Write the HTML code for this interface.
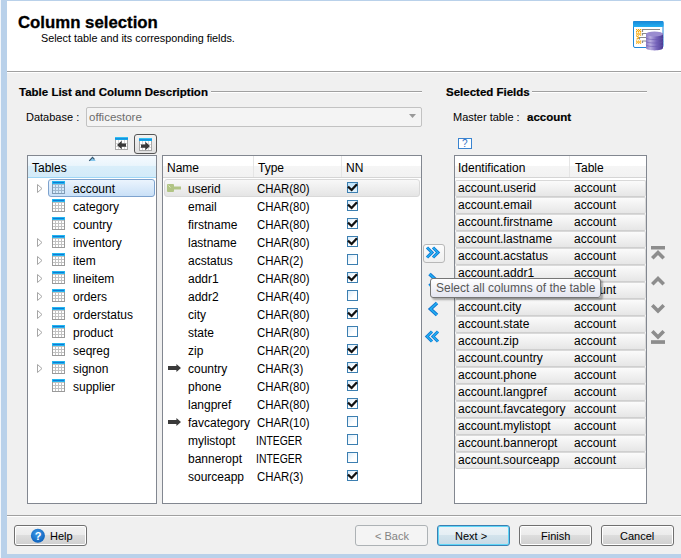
<!DOCTYPE html><html><head><meta charset="utf-8"><style>
*{margin:0;padding:0;box-sizing:border-box}
html,body{width:681px;height:558px;overflow:hidden;background:#f0f0f0;font-family:"Liberation Sans",sans-serif;color:#000}
.a{position:absolute}
.t{position:absolute;white-space:nowrap;line-height:14px}
</style></head><body>
<div class="a" style="left:0;top:0;width:1px;height:558px;background:#f2f6fb"></div>
<div class="a" style="left:1px;top:0;width:6px;height:558px;background:#b9d1ea"></div>
<div class="a" style="left:7px;top:0;width:674px;height:1px;background:#b9d1ea"></div>
<div class="a" style="left:7px;top:1px;width:674px;height:70px;background:#fff"></div>
<div class="a" style="left:7px;top:71px;width:674px;height:1px;background:#a0a0a0"></div>
<div class="a" style="left:7px;top:72px;width:674px;height:1px;background:#fff"></div>
<div class="a" style="left:7px;top:554px;width:674px;height:4px;background:#b9d1ea"></div>
<div class="t" style="left:18px;top:12.5px;font-size:16.8px;font-weight:bold;line-height:20px;-webkit-text-stroke:0.3px #000">Column selection</div>
<div class="t" style="left:41px;top:31px;font-size:10.8px;color:#000">Select table and its corresponding fields.</div>
<svg class="a" style="left:630px;top:18px" width="36" height="36" viewBox="0 0 36 36">
<defs><linearGradient id="tb" x1="0" y1="0" x2="0" y2="1"><stop offset="0" stop-color="#1a86d6"/><stop offset="1" stop-color="#22b0f2"/></linearGradient>
<linearGradient id="cy" x1="0" y1="0" x2="1" y2="0"><stop offset="0" stop-color="#8a7cc4"/><stop offset="0.25" stop-color="#b9aee0"/><stop offset="0.6" stop-color="#7a68be"/><stop offset="1" stop-color="#4a3a92"/></linearGradient></defs>
<rect x="3.5" y="3.5" width="29.5" height="26" rx="1.5" fill="#fff" stroke="#2086d8"/>
<rect x="3" y="3" width="30.5" height="6" rx="1" fill="url(#tb)"/>
<g fill="#f7a600"><rect x="6" y="11" width="1.2" height="1.2"/><rect x="8" y="11" width="1.2" height="1.2"/><rect x="10" y="11" width="1.2" height="1.2"/><rect x="7" y="12" width="1.2" height="1.2"/><rect x="9" y="12" width="1.2" height="1.2"/><rect x="6" y="13" width="1.2" height="1.2"/><rect x="8" y="13" width="1.2" height="1.2"/><rect x="10" y="13" width="1.2" height="1.2"/><rect x="6" y="14.5" width="1.2" height="1.2"/><rect x="8" y="14.5" width="1.2" height="1.2"/><rect x="10" y="14.5" width="1.2" height="1.2"/><rect x="7" y="15.5" width="1.2" height="1.2"/><rect x="9" y="15.5" width="1.2" height="1.2"/><rect x="6" y="16.5" width="1.2" height="1.2"/><rect x="8" y="16.5" width="1.2" height="1.2"/><rect x="10" y="16.5" width="1.2" height="1.2"/><rect x="6" y="22.5" width="1.2" height="1.2"/><rect x="8" y="22.5" width="1.2" height="1.2"/><rect x="10" y="22.5" width="1.2" height="1.2"/><rect x="7" y="23.5" width="1.2" height="1.2"/><rect x="9" y="23.5" width="1.2" height="1.2"/><rect x="6" y="24.5" width="1.2" height="1.2"/><rect x="8" y="24.5" width="1.2" height="1.2"/><rect x="10" y="24.5" width="1.2" height="1.2"/></g><path d="M6.5 18.2l3 1.5-3 1.5" stroke="#f7a600" stroke-width="1.2" fill="none"/>
<g stroke="#8a8a8a" fill="none" stroke-width="1.2"><path d="M12.5 14v-2.5h17.5M12.5 17.5v-2h7M9.5 21.5v-2h9M12.5 25v-2h6"/></g>
<path d="M16 16c0-2.5 17-2.5 17 0v14c0 3.2-17 3.2-17 0z" fill="url(#cy)"/>
<ellipse cx="24.5" cy="16" rx="8.5" ry="2.6" fill="#9a8cd0"/>
<g stroke="#6a58b0" stroke-width="0.8" fill="none" opacity="0.7"><path d="M16 19.8c0 2.3 17 2.3 17 0M16 23.3c0 2.3 17 2.3 17 0M16 26.8c0 2.3 17 2.3 17 0"/></g>
</svg>
<div class="t" style="left:19px;top:85px;font-size:11.5px;font-weight:bold;-webkit-text-stroke:0.2px #000">Table List and Column Description</div>
<div class="a" style="left:211px;top:91px;width:211px;height:1px;background:#a0a0a0;box-shadow:0 1px 0 #fff"></div>
<div class="t" style="left:446px;top:85px;font-size:11.5px;font-weight:bold;-webkit-text-stroke:0.2px #000">Selected Fields</div>
<div class="a" style="left:532px;top:91px;width:115px;height:1px;background:#a0a0a0;box-shadow:0 1px 0 #fff"></div>
<div class="t" style="left:26px;top:110px;font-size:11px">Database :</div>
<div class="a" style="left:86px;top:107px;width:336px;height:20px;border:1px solid #c2c2c2;border-radius:2px;background:#f4f4f4"></div>
<div class="t" style="left:89px;top:110px;font-size:11.5px;color:#6d6d6d">officestore</div>
<svg class="a" style="left:409px;top:114px" width="8" height="5"><path d="M0 0h7l-3.5 4z" fill="#999"/></svg>
<div class="t" style="left:453px;top:110px;font-size:11px">Master table :</div>
<div class="t" style="left:527px;top:110px;font-size:11.5px;font-weight:bold;-webkit-text-stroke:0.2px #000">account</div>
<div class="a" style="left:458px;top:138px;width:14px;height:11px;border:1px solid #3a84d0;background:#fff"></div>
<div class="t" style="left:462px;top:138px;font-size:10px;color:#2f6fc4;line-height:12px">?</div>
<svg class="a" style="left:115px;top:137px" width="13" height="13" viewBox="0 0 13 13">
<g shape-rendering="crispEdges"><rect x="0" y="0" width="13" height="13" fill="#a8a8a8"/><rect x="1" y="3" width="11" height="9" fill="#fff"/>
<path d="M1 6.5h11M1 9.5h11M3.5 3v9M6.5 3v9M9.5 3v9" stroke="#d6d6d6"/>
<rect x="0" y="0" width="13" height="1" fill="#33c0f0"/><rect x="0" y="1" width="13" height="1" fill="#1a8fe0"/><rect x="0" y="2" width="13" height="1" fill="#14a8e8"/></g>
<path d="M2 8L6.7 3.8V6.4H11V9.8H6.7V12.2z" fill="#3a3a3a"/></svg>
<div class="a" style="left:134px;top:134px;width:23px;height:20px;border:1px solid #555;border-radius:3px;background:linear-gradient(#f2f2f2,#e0e0e0)"></div>
<svg class="a" style="left:139px;top:138px" width="13" height="13" viewBox="0 0 13 13">
<g shape-rendering="crispEdges"><rect x="0" y="0" width="13" height="13" fill="#a8a8a8"/><rect x="1" y="3" width="11" height="9" fill="#fff"/>
<path d="M1 6.5h11M1 9.5h11M3.5 3v9M6.5 3v9M9.5 3v9" stroke="#d6d6d6"/>
<rect x="0" y="0" width="13" height="1" fill="#33c0f0"/><rect x="0" y="1" width="13" height="1" fill="#1a8fe0"/><rect x="0" y="2" width="13" height="1" fill="#14a8e8"/></g>
<path d="M11 8L6.3 3.8V6.4H2V9.8H6.3V12.2z" fill="#3a3a3a"/></svg>
<div class="a" style="left:27px;top:155px;width:130px;height:349px;border:1px solid #828790;background:#fff"></div>
<div class="a" style="left:162px;top:155px;width:260px;height:349px;border:1px solid #828790;background:#fff"></div>
<div class="a" style="left:454px;top:155px;width:193px;height:349px;border:1px solid #828790;background:#fff"></div>
<div class="a" style="left:28px;top:156px;width:128px;height:22px;background:linear-gradient(#f5fafe 0%,#eaf5fc 45%,#d9eefa 50%,#d3ebf9 100%);border-bottom:1px solid #9fd6f5"></div>
<svg class="a" style="left:88px;top:156px" width="9" height="6"><path d="M1 5L4.5 1.3L7.8 5z" fill="#86c8ee"/><path d="M1.2 4.8L4.5 1.3L6.5 3.4" stroke="#34566e" stroke-width="1.1" fill="none"/></svg>
<div class="t" style="left:32px;top:161px;font-size:12px">Tables</div>
<div class="a" style="left:48px;top:179px;width:107px;height:18px;border:1px solid #7da2ce;border-radius:3px;background:linear-gradient(#ebf4fd,#c9e0f7)"></div>
<svg class="a" style="left:37px;top:184px" width="7" height="10"><path d="M0.5 0.5l4.5 4-4.5 4z" fill="#fff" stroke="#a6a6a6"/></svg>
<svg class="a" style="left:52px;top:181px" width="13" height="13" viewBox="0 0 13 13" shape-rendering="crispEdges">
<rect x="0" y="0" width="13" height="13" fill="#7f9bb5"/><rect x="1" y="3" width="11" height="9" fill="#9fb8cf"/><rect x="1" y="4" width="2" height="2" fill="#d3e9fb"/><rect x="4" y="4" width="2" height="2" fill="#d3e9fb"/><rect x="7" y="4" width="2" height="2" fill="#d3e9fb"/><rect x="10" y="4" width="2" height="2" fill="#d3e9fb"/><rect x="1" y="7" width="2" height="2" fill="#d3e9fb"/><rect x="4" y="7" width="2" height="2" fill="#d3e9fb"/><rect x="7" y="7" width="2" height="2" fill="#d3e9fb"/><rect x="10" y="7" width="2" height="2" fill="#d3e9fb"/><rect x="1" y="10" width="2" height="2" fill="#d3e9fb"/><rect x="4" y="10" width="2" height="2" fill="#d3e9fb"/><rect x="7" y="10" width="2" height="2" fill="#d3e9fb"/><rect x="10" y="10" width="2" height="2" fill="#d3e9fb"/>
<rect x="0" y="0" width="13" height="3" fill="#22b6f0"/><rect x="1" y="1" width="11" height="1" fill="#117ad6"/>
</svg>
<div class="t" style="left:73px;top:182px;font-size:12px">account</div>
<svg class="a" style="left:52px;top:199px" width="13" height="13" viewBox="0 0 13 13" shape-rendering="crispEdges">
<rect x="0" y="0" width="13" height="13" fill="#9a9a9a"/><rect x="1" y="3" width="11" height="9" fill="#c2c2c2"/><rect x="1" y="4" width="2" height="2" fill="#fff"/><rect x="4" y="4" width="2" height="2" fill="#fff"/><rect x="7" y="4" width="2" height="2" fill="#fff"/><rect x="10" y="4" width="2" height="2" fill="#fff"/><rect x="1" y="7" width="2" height="2" fill="#fff"/><rect x="4" y="7" width="2" height="2" fill="#fff"/><rect x="7" y="7" width="2" height="2" fill="#fff"/><rect x="10" y="7" width="2" height="2" fill="#fff"/><rect x="1" y="10" width="2" height="2" fill="#fff"/><rect x="4" y="10" width="2" height="2" fill="#fff"/><rect x="7" y="10" width="2" height="2" fill="#fff"/><rect x="10" y="10" width="2" height="2" fill="#fff"/>
<rect x="0" y="0" width="13" height="3" fill="#22b6f0"/><rect x="1" y="1" width="11" height="1" fill="#117ad6"/>
</svg>
<div class="t" style="left:73px;top:200px;font-size:12px">category</div>
<svg class="a" style="left:52px;top:217px" width="13" height="13" viewBox="0 0 13 13" shape-rendering="crispEdges">
<rect x="0" y="0" width="13" height="13" fill="#9a9a9a"/><rect x="1" y="3" width="11" height="9" fill="#c2c2c2"/><rect x="1" y="4" width="2" height="2" fill="#fff"/><rect x="4" y="4" width="2" height="2" fill="#fff"/><rect x="7" y="4" width="2" height="2" fill="#fff"/><rect x="10" y="4" width="2" height="2" fill="#fff"/><rect x="1" y="7" width="2" height="2" fill="#fff"/><rect x="4" y="7" width="2" height="2" fill="#fff"/><rect x="7" y="7" width="2" height="2" fill="#fff"/><rect x="10" y="7" width="2" height="2" fill="#fff"/><rect x="1" y="10" width="2" height="2" fill="#fff"/><rect x="4" y="10" width="2" height="2" fill="#fff"/><rect x="7" y="10" width="2" height="2" fill="#fff"/><rect x="10" y="10" width="2" height="2" fill="#fff"/>
<rect x="0" y="0" width="13" height="3" fill="#22b6f0"/><rect x="1" y="1" width="11" height="1" fill="#117ad6"/>
</svg>
<div class="t" style="left:73px;top:218px;font-size:12px">country</div>
<svg class="a" style="left:37px;top:238px" width="7" height="10"><path d="M0.5 0.5l4.5 4-4.5 4z" fill="#fff" stroke="#a6a6a6"/></svg>
<svg class="a" style="left:52px;top:235px" width="13" height="13" viewBox="0 0 13 13" shape-rendering="crispEdges">
<rect x="0" y="0" width="13" height="13" fill="#9a9a9a"/><rect x="1" y="3" width="11" height="9" fill="#c2c2c2"/><rect x="1" y="4" width="2" height="2" fill="#fff"/><rect x="4" y="4" width="2" height="2" fill="#fff"/><rect x="7" y="4" width="2" height="2" fill="#fff"/><rect x="10" y="4" width="2" height="2" fill="#fff"/><rect x="1" y="7" width="2" height="2" fill="#fff"/><rect x="4" y="7" width="2" height="2" fill="#fff"/><rect x="7" y="7" width="2" height="2" fill="#fff"/><rect x="10" y="7" width="2" height="2" fill="#fff"/><rect x="1" y="10" width="2" height="2" fill="#fff"/><rect x="4" y="10" width="2" height="2" fill="#fff"/><rect x="7" y="10" width="2" height="2" fill="#fff"/><rect x="10" y="10" width="2" height="2" fill="#fff"/>
<rect x="0" y="0" width="13" height="3" fill="#22b6f0"/><rect x="1" y="1" width="11" height="1" fill="#117ad6"/>
</svg>
<div class="t" style="left:73px;top:236px;font-size:12px">inventory</div>
<svg class="a" style="left:37px;top:256px" width="7" height="10"><path d="M0.5 0.5l4.5 4-4.5 4z" fill="#fff" stroke="#a6a6a6"/></svg>
<svg class="a" style="left:52px;top:253px" width="13" height="13" viewBox="0 0 13 13" shape-rendering="crispEdges">
<rect x="0" y="0" width="13" height="13" fill="#9a9a9a"/><rect x="1" y="3" width="11" height="9" fill="#c2c2c2"/><rect x="1" y="4" width="2" height="2" fill="#fff"/><rect x="4" y="4" width="2" height="2" fill="#fff"/><rect x="7" y="4" width="2" height="2" fill="#fff"/><rect x="10" y="4" width="2" height="2" fill="#fff"/><rect x="1" y="7" width="2" height="2" fill="#fff"/><rect x="4" y="7" width="2" height="2" fill="#fff"/><rect x="7" y="7" width="2" height="2" fill="#fff"/><rect x="10" y="7" width="2" height="2" fill="#fff"/><rect x="1" y="10" width="2" height="2" fill="#fff"/><rect x="4" y="10" width="2" height="2" fill="#fff"/><rect x="7" y="10" width="2" height="2" fill="#fff"/><rect x="10" y="10" width="2" height="2" fill="#fff"/>
<rect x="0" y="0" width="13" height="3" fill="#22b6f0"/><rect x="1" y="1" width="11" height="1" fill="#117ad6"/>
</svg>
<div class="t" style="left:73px;top:254px;font-size:12px">item</div>
<svg class="a" style="left:37px;top:274px" width="7" height="10"><path d="M0.5 0.5l4.5 4-4.5 4z" fill="#fff" stroke="#a6a6a6"/></svg>
<svg class="a" style="left:52px;top:271px" width="13" height="13" viewBox="0 0 13 13" shape-rendering="crispEdges">
<rect x="0" y="0" width="13" height="13" fill="#9a9a9a"/><rect x="1" y="3" width="11" height="9" fill="#c2c2c2"/><rect x="1" y="4" width="2" height="2" fill="#fff"/><rect x="4" y="4" width="2" height="2" fill="#fff"/><rect x="7" y="4" width="2" height="2" fill="#fff"/><rect x="10" y="4" width="2" height="2" fill="#fff"/><rect x="1" y="7" width="2" height="2" fill="#fff"/><rect x="4" y="7" width="2" height="2" fill="#fff"/><rect x="7" y="7" width="2" height="2" fill="#fff"/><rect x="10" y="7" width="2" height="2" fill="#fff"/><rect x="1" y="10" width="2" height="2" fill="#fff"/><rect x="4" y="10" width="2" height="2" fill="#fff"/><rect x="7" y="10" width="2" height="2" fill="#fff"/><rect x="10" y="10" width="2" height="2" fill="#fff"/>
<rect x="0" y="0" width="13" height="3" fill="#22b6f0"/><rect x="1" y="1" width="11" height="1" fill="#117ad6"/>
</svg>
<div class="t" style="left:73px;top:272px;font-size:12px">lineitem</div>
<svg class="a" style="left:37px;top:292px" width="7" height="10"><path d="M0.5 0.5l4.5 4-4.5 4z" fill="#fff" stroke="#a6a6a6"/></svg>
<svg class="a" style="left:52px;top:289px" width="13" height="13" viewBox="0 0 13 13" shape-rendering="crispEdges">
<rect x="0" y="0" width="13" height="13" fill="#9a9a9a"/><rect x="1" y="3" width="11" height="9" fill="#c2c2c2"/><rect x="1" y="4" width="2" height="2" fill="#fff"/><rect x="4" y="4" width="2" height="2" fill="#fff"/><rect x="7" y="4" width="2" height="2" fill="#fff"/><rect x="10" y="4" width="2" height="2" fill="#fff"/><rect x="1" y="7" width="2" height="2" fill="#fff"/><rect x="4" y="7" width="2" height="2" fill="#fff"/><rect x="7" y="7" width="2" height="2" fill="#fff"/><rect x="10" y="7" width="2" height="2" fill="#fff"/><rect x="1" y="10" width="2" height="2" fill="#fff"/><rect x="4" y="10" width="2" height="2" fill="#fff"/><rect x="7" y="10" width="2" height="2" fill="#fff"/><rect x="10" y="10" width="2" height="2" fill="#fff"/>
<rect x="0" y="0" width="13" height="3" fill="#22b6f0"/><rect x="1" y="1" width="11" height="1" fill="#117ad6"/>
</svg>
<div class="t" style="left:73px;top:290px;font-size:12px">orders</div>
<svg class="a" style="left:37px;top:310px" width="7" height="10"><path d="M0.5 0.5l4.5 4-4.5 4z" fill="#fff" stroke="#a6a6a6"/></svg>
<svg class="a" style="left:52px;top:307px" width="13" height="13" viewBox="0 0 13 13" shape-rendering="crispEdges">
<rect x="0" y="0" width="13" height="13" fill="#9a9a9a"/><rect x="1" y="3" width="11" height="9" fill="#c2c2c2"/><rect x="1" y="4" width="2" height="2" fill="#fff"/><rect x="4" y="4" width="2" height="2" fill="#fff"/><rect x="7" y="4" width="2" height="2" fill="#fff"/><rect x="10" y="4" width="2" height="2" fill="#fff"/><rect x="1" y="7" width="2" height="2" fill="#fff"/><rect x="4" y="7" width="2" height="2" fill="#fff"/><rect x="7" y="7" width="2" height="2" fill="#fff"/><rect x="10" y="7" width="2" height="2" fill="#fff"/><rect x="1" y="10" width="2" height="2" fill="#fff"/><rect x="4" y="10" width="2" height="2" fill="#fff"/><rect x="7" y="10" width="2" height="2" fill="#fff"/><rect x="10" y="10" width="2" height="2" fill="#fff"/>
<rect x="0" y="0" width="13" height="3" fill="#22b6f0"/><rect x="1" y="1" width="11" height="1" fill="#117ad6"/>
</svg>
<div class="t" style="left:73px;top:308px;font-size:12px">orderstatus</div>
<svg class="a" style="left:37px;top:328px" width="7" height="10"><path d="M0.5 0.5l4.5 4-4.5 4z" fill="#fff" stroke="#a6a6a6"/></svg>
<svg class="a" style="left:52px;top:325px" width="13" height="13" viewBox="0 0 13 13" shape-rendering="crispEdges">
<rect x="0" y="0" width="13" height="13" fill="#9a9a9a"/><rect x="1" y="3" width="11" height="9" fill="#c2c2c2"/><rect x="1" y="4" width="2" height="2" fill="#fff"/><rect x="4" y="4" width="2" height="2" fill="#fff"/><rect x="7" y="4" width="2" height="2" fill="#fff"/><rect x="10" y="4" width="2" height="2" fill="#fff"/><rect x="1" y="7" width="2" height="2" fill="#fff"/><rect x="4" y="7" width="2" height="2" fill="#fff"/><rect x="7" y="7" width="2" height="2" fill="#fff"/><rect x="10" y="7" width="2" height="2" fill="#fff"/><rect x="1" y="10" width="2" height="2" fill="#fff"/><rect x="4" y="10" width="2" height="2" fill="#fff"/><rect x="7" y="10" width="2" height="2" fill="#fff"/><rect x="10" y="10" width="2" height="2" fill="#fff"/>
<rect x="0" y="0" width="13" height="3" fill="#22b6f0"/><rect x="1" y="1" width="11" height="1" fill="#117ad6"/>
</svg>
<div class="t" style="left:73px;top:326px;font-size:12px">product</div>
<svg class="a" style="left:52px;top:343px" width="13" height="13" viewBox="0 0 13 13" shape-rendering="crispEdges">
<rect x="0" y="0" width="13" height="13" fill="#9a9a9a"/><rect x="1" y="3" width="11" height="9" fill="#c2c2c2"/><rect x="1" y="4" width="2" height="2" fill="#fff"/><rect x="4" y="4" width="2" height="2" fill="#fff"/><rect x="7" y="4" width="2" height="2" fill="#fff"/><rect x="10" y="4" width="2" height="2" fill="#fff"/><rect x="1" y="7" width="2" height="2" fill="#fff"/><rect x="4" y="7" width="2" height="2" fill="#fff"/><rect x="7" y="7" width="2" height="2" fill="#fff"/><rect x="10" y="7" width="2" height="2" fill="#fff"/><rect x="1" y="10" width="2" height="2" fill="#fff"/><rect x="4" y="10" width="2" height="2" fill="#fff"/><rect x="7" y="10" width="2" height="2" fill="#fff"/><rect x="10" y="10" width="2" height="2" fill="#fff"/>
<rect x="0" y="0" width="13" height="3" fill="#22b6f0"/><rect x="1" y="1" width="11" height="1" fill="#117ad6"/>
</svg>
<div class="t" style="left:73px;top:344px;font-size:12px">seqreg</div>
<svg class="a" style="left:37px;top:364px" width="7" height="10"><path d="M0.5 0.5l4.5 4-4.5 4z" fill="#fff" stroke="#a6a6a6"/></svg>
<svg class="a" style="left:52px;top:361px" width="13" height="13" viewBox="0 0 13 13" shape-rendering="crispEdges">
<rect x="0" y="0" width="13" height="13" fill="#9a9a9a"/><rect x="1" y="3" width="11" height="9" fill="#c2c2c2"/><rect x="1" y="4" width="2" height="2" fill="#fff"/><rect x="4" y="4" width="2" height="2" fill="#fff"/><rect x="7" y="4" width="2" height="2" fill="#fff"/><rect x="10" y="4" width="2" height="2" fill="#fff"/><rect x="1" y="7" width="2" height="2" fill="#fff"/><rect x="4" y="7" width="2" height="2" fill="#fff"/><rect x="7" y="7" width="2" height="2" fill="#fff"/><rect x="10" y="7" width="2" height="2" fill="#fff"/><rect x="1" y="10" width="2" height="2" fill="#fff"/><rect x="4" y="10" width="2" height="2" fill="#fff"/><rect x="7" y="10" width="2" height="2" fill="#fff"/><rect x="10" y="10" width="2" height="2" fill="#fff"/>
<rect x="0" y="0" width="13" height="3" fill="#22b6f0"/><rect x="1" y="1" width="11" height="1" fill="#117ad6"/>
</svg>
<div class="t" style="left:73px;top:362px;font-size:12px">signon</div>
<svg class="a" style="left:52px;top:379px" width="13" height="13" viewBox="0 0 13 13" shape-rendering="crispEdges">
<rect x="0" y="0" width="13" height="13" fill="#9a9a9a"/><rect x="1" y="3" width="11" height="9" fill="#c2c2c2"/><rect x="1" y="4" width="2" height="2" fill="#fff"/><rect x="4" y="4" width="2" height="2" fill="#fff"/><rect x="7" y="4" width="2" height="2" fill="#fff"/><rect x="10" y="4" width="2" height="2" fill="#fff"/><rect x="1" y="7" width="2" height="2" fill="#fff"/><rect x="4" y="7" width="2" height="2" fill="#fff"/><rect x="7" y="7" width="2" height="2" fill="#fff"/><rect x="10" y="7" width="2" height="2" fill="#fff"/><rect x="1" y="10" width="2" height="2" fill="#fff"/><rect x="4" y="10" width="2" height="2" fill="#fff"/><rect x="7" y="10" width="2" height="2" fill="#fff"/><rect x="10" y="10" width="2" height="2" fill="#fff"/>
<rect x="0" y="0" width="13" height="3" fill="#22b6f0"/><rect x="1" y="1" width="11" height="1" fill="#117ad6"/>
</svg>
<div class="t" style="left:73px;top:380px;font-size:12px">supplier</div>
<div class="a" style="left:163px;top:156px;width:258px;height:22px;background:linear-gradient(#fff 0%,#fff 45%,#f5f5f5 50%,#f2f2f2 100%);border-bottom:1px solid #d5d5d5"></div>
<div class="a" style="left:253px;top:156px;width:1px;height:21px;background:#e5e5e5"></div>
<div class="a" style="left:341px;top:156px;width:1px;height:21px;background:#e5e5e5"></div>
<div class="t" style="left:167px;top:161px;font-size:12px">Name</div>
<div class="t" style="left:258px;top:161px;font-size:12px">Type</div>
<div class="t" style="left:346px;top:161px;font-size:12px">NN</div>
<div class="a" style="left:164px;top:179px;width:256px;height:18px;border:1px solid #d9d9d9;border-radius:3px;background:linear-gradient(#f8f8f8,#e5e5e5)"></div>
<svg class="a" style="left:167px;top:184px" width="15" height="9"><rect x="0" y="0" width="7" height="8" rx="1" fill="#b1c485"/><rect x="6" y="2.5" width="8" height="3" fill="#b1c485"/><path d="M1.5 1.5l2 2" stroke="#e0ecc0"/></svg>
<div class="t" style="left:188px;top:182px;font-size:12px">userid</div>
<div class="t" style="left:257px;top:182px;font-size:12px;transform:scaleX(0.95);transform-origin:0 0">CHAR(80)</div>
<div class="a" style="left:347px;top:182px;width:11px;height:11px;border:1px solid #3c7fb1;background:linear-gradient(#bfe3fb,#e3f3fd)"></div>
<svg class="a" style="left:347px;top:182px" width="11" height="11"><path d="M1 4.7L4.6 8L10 2.2" stroke="#111" stroke-width="2.3" fill="none"/></svg>
<div class="t" style="left:188px;top:200px;font-size:12px">email</div>
<div class="t" style="left:257px;top:200px;font-size:12px;transform:scaleX(0.95);transform-origin:0 0">CHAR(80)</div>
<div class="a" style="left:347px;top:200px;width:11px;height:11px;border:1px solid #3c7fb1;background:linear-gradient(135deg,#d8ebfa,#fff 60%)"></div>
<svg class="a" style="left:347px;top:200px" width="11" height="11"><path d="M1 4.7L4.6 8L10 2.2" stroke="#111" stroke-width="2.3" fill="none"/></svg>
<div class="t" style="left:188px;top:218px;font-size:12px">firstname</div>
<div class="t" style="left:257px;top:218px;font-size:12px;transform:scaleX(0.95);transform-origin:0 0">CHAR(80)</div>
<div class="a" style="left:347px;top:218px;width:11px;height:11px;border:1px solid #3c7fb1;background:linear-gradient(135deg,#d8ebfa,#fff 60%)"></div>
<svg class="a" style="left:347px;top:218px" width="11" height="11"><path d="M1 4.7L4.6 8L10 2.2" stroke="#111" stroke-width="2.3" fill="none"/></svg>
<div class="t" style="left:188px;top:236px;font-size:12px">lastname</div>
<div class="t" style="left:257px;top:236px;font-size:12px;transform:scaleX(0.95);transform-origin:0 0">CHAR(80)</div>
<div class="a" style="left:347px;top:236px;width:11px;height:11px;border:1px solid #3c7fb1;background:linear-gradient(135deg,#d8ebfa,#fff 60%)"></div>
<svg class="a" style="left:347px;top:236px" width="11" height="11"><path d="M1 4.7L4.6 8L10 2.2" stroke="#111" stroke-width="2.3" fill="none"/></svg>
<div class="t" style="left:188px;top:254px;font-size:12px">acstatus</div>
<div class="t" style="left:257px;top:254px;font-size:12px;transform:scaleX(0.95);transform-origin:0 0">CHAR(2)</div>
<div class="a" style="left:347px;top:254px;width:11px;height:11px;border:1px solid #3c7fb1;background:linear-gradient(135deg,#d8ebfa,#fff 60%)"></div>
<div class="t" style="left:188px;top:272px;font-size:12px">addr1</div>
<div class="t" style="left:257px;top:272px;font-size:12px;transform:scaleX(0.95);transform-origin:0 0">CHAR(80)</div>
<div class="a" style="left:347px;top:272px;width:11px;height:11px;border:1px solid #3c7fb1;background:linear-gradient(135deg,#d8ebfa,#fff 60%)"></div>
<svg class="a" style="left:347px;top:272px" width="11" height="11"><path d="M1 4.7L4.6 8L10 2.2" stroke="#111" stroke-width="2.3" fill="none"/></svg>
<div class="t" style="left:188px;top:290px;font-size:12px">addr2</div>
<div class="t" style="left:257px;top:290px;font-size:12px;transform:scaleX(0.95);transform-origin:0 0">CHAR(40)</div>
<div class="a" style="left:347px;top:290px;width:11px;height:11px;border:1px solid #3c7fb1;background:linear-gradient(135deg,#d8ebfa,#fff 60%)"></div>
<div class="t" style="left:188px;top:308px;font-size:12px">city</div>
<div class="t" style="left:257px;top:308px;font-size:12px;transform:scaleX(0.95);transform-origin:0 0">CHAR(80)</div>
<div class="a" style="left:347px;top:308px;width:11px;height:11px;border:1px solid #3c7fb1;background:linear-gradient(135deg,#d8ebfa,#fff 60%)"></div>
<svg class="a" style="left:347px;top:308px" width="11" height="11"><path d="M1 4.7L4.6 8L10 2.2" stroke="#111" stroke-width="2.3" fill="none"/></svg>
<div class="t" style="left:188px;top:326px;font-size:12px">state</div>
<div class="t" style="left:257px;top:326px;font-size:12px;transform:scaleX(0.95);transform-origin:0 0">CHAR(80)</div>
<div class="a" style="left:347px;top:326px;width:11px;height:11px;border:1px solid #3c7fb1;background:linear-gradient(135deg,#d8ebfa,#fff 60%)"></div>
<div class="t" style="left:188px;top:344px;font-size:12px">zip</div>
<div class="t" style="left:257px;top:344px;font-size:12px;transform:scaleX(0.95);transform-origin:0 0">CHAR(20)</div>
<div class="a" style="left:347px;top:344px;width:11px;height:11px;border:1px solid #3c7fb1;background:linear-gradient(135deg,#d8ebfa,#fff 60%)"></div>
<svg class="a" style="left:347px;top:344px" width="11" height="11"><path d="M1 4.7L4.6 8L10 2.2" stroke="#111" stroke-width="2.3" fill="none"/></svg>
<svg class="a" style="left:168px;top:364px" width="14" height="8"><path d="M0 2.1H8.4V0L13 4L8.4 8V5.9H0z" fill="#3a3a3a"/></svg>
<div class="t" style="left:188px;top:362px;font-size:12px">country</div>
<div class="t" style="left:257px;top:362px;font-size:12px;transform:scaleX(0.95);transform-origin:0 0">CHAR(3)</div>
<div class="a" style="left:347px;top:362px;width:11px;height:11px;border:1px solid #3c7fb1;background:linear-gradient(135deg,#d8ebfa,#fff 60%)"></div>
<svg class="a" style="left:347px;top:362px" width="11" height="11"><path d="M1 4.7L4.6 8L10 2.2" stroke="#111" stroke-width="2.3" fill="none"/></svg>
<div class="t" style="left:188px;top:380px;font-size:12px">phone</div>
<div class="t" style="left:257px;top:380px;font-size:12px;transform:scaleX(0.95);transform-origin:0 0">CHAR(80)</div>
<div class="a" style="left:347px;top:380px;width:11px;height:11px;border:1px solid #3c7fb1;background:linear-gradient(135deg,#d8ebfa,#fff 60%)"></div>
<svg class="a" style="left:347px;top:380px" width="11" height="11"><path d="M1 4.7L4.6 8L10 2.2" stroke="#111" stroke-width="2.3" fill="none"/></svg>
<div class="t" style="left:188px;top:398px;font-size:12px">langpref</div>
<div class="t" style="left:257px;top:398px;font-size:12px;transform:scaleX(0.95);transform-origin:0 0">CHAR(80)</div>
<div class="a" style="left:347px;top:398px;width:11px;height:11px;border:1px solid #3c7fb1;background:linear-gradient(135deg,#d8ebfa,#fff 60%)"></div>
<svg class="a" style="left:347px;top:398px" width="11" height="11"><path d="M1 4.7L4.6 8L10 2.2" stroke="#111" stroke-width="2.3" fill="none"/></svg>
<svg class="a" style="left:168px;top:418px" width="14" height="8"><path d="M0 2.1H8.4V0L13 4L8.4 8V5.9H0z" fill="#3a3a3a"/></svg>
<div class="t" style="left:188px;top:416px;font-size:12px">favcategory</div>
<div class="t" style="left:257px;top:416px;font-size:12px;transform:scaleX(0.95);transform-origin:0 0">CHAR(10)</div>
<div class="a" style="left:347px;top:416px;width:11px;height:11px;border:1px solid #3c7fb1;background:linear-gradient(135deg,#d8ebfa,#fff 60%)"></div>
<div class="t" style="left:188px;top:434px;font-size:12px">mylistopt</div>
<div class="t" style="left:256px;top:434px;font-size:12px;transform:scaleX(0.865);transform-origin:0 0">INTEGER</div>
<div class="a" style="left:347px;top:434px;width:11px;height:11px;border:1px solid #3c7fb1;background:linear-gradient(135deg,#d8ebfa,#fff 60%)"></div>
<div class="t" style="left:188px;top:452px;font-size:12px">banneropt</div>
<div class="t" style="left:256px;top:452px;font-size:12px;transform:scaleX(0.865);transform-origin:0 0">INTEGER</div>
<div class="a" style="left:347px;top:452px;width:11px;height:11px;border:1px solid #3c7fb1;background:linear-gradient(135deg,#d8ebfa,#fff 60%)"></div>
<div class="t" style="left:188px;top:470px;font-size:12px">sourceapp</div>
<div class="t" style="left:257px;top:470px;font-size:12px;transform:scaleX(0.95);transform-origin:0 0">CHAR(3)</div>
<div class="a" style="left:347px;top:470px;width:11px;height:11px;border:1px solid #3c7fb1;background:linear-gradient(135deg,#d8ebfa,#fff 60%)"></div>
<svg class="a" style="left:347px;top:470px" width="11" height="11"><path d="M1 4.7L4.6 8L10 2.2" stroke="#111" stroke-width="2.3" fill="none"/></svg>
<div class="a" style="left:455px;top:156px;width:191px;height:22px;background:linear-gradient(#fff 0%,#fff 45%,#f5f5f5 50%,#f2f2f2 100%);border-bottom:1px solid #d5d5d5"></div>
<div class="a" style="left:569px;top:156px;width:1px;height:21px;background:#e5e5e5"></div>
<div class="t" style="left:458px;top:161px;font-size:12px">Identification</div>
<div class="t" style="left:575px;top:161px;font-size:12px">Table</div>
<div class="a" style="left:455px;top:180px;width:191px;height:17px;border:1px solid #d9d9d9;border-bottom-color:#cfcfcf;border-radius:2px;background:linear-gradient(#fbfbfb,#e6e6e6)"></div>
<div class="t" style="left:458px;top:181px;font-size:12px">account.userid</div>
<div class="t" style="left:574px;top:181px;font-size:12px">account</div>
<div class="a" style="left:455px;top:197px;width:191px;height:17px;border:1px solid #d9d9d9;border-bottom-color:#cfcfcf;border-radius:2px;background:linear-gradient(#fbfbfb,#e6e6e6)"></div>
<div class="t" style="left:458px;top:198px;font-size:12px">account.email</div>
<div class="t" style="left:574px;top:198px;font-size:12px">account</div>
<div class="a" style="left:455px;top:214px;width:191px;height:17px;border:1px solid #d9d9d9;border-bottom-color:#cfcfcf;border-radius:2px;background:linear-gradient(#fbfbfb,#e6e6e6)"></div>
<div class="t" style="left:458px;top:215px;font-size:12px">account.firstname</div>
<div class="t" style="left:574px;top:215px;font-size:12px">account</div>
<div class="a" style="left:455px;top:231px;width:191px;height:17px;border:1px solid #d9d9d9;border-bottom-color:#cfcfcf;border-radius:2px;background:linear-gradient(#fbfbfb,#e6e6e6)"></div>
<div class="t" style="left:458px;top:232px;font-size:12px">account.lastname</div>
<div class="t" style="left:574px;top:232px;font-size:12px">account</div>
<div class="a" style="left:455px;top:248px;width:191px;height:17px;border:1px solid #d9d9d9;border-bottom-color:#cfcfcf;border-radius:2px;background:linear-gradient(#fbfbfb,#e6e6e6)"></div>
<div class="t" style="left:458px;top:249px;font-size:12px">account.acstatus</div>
<div class="t" style="left:574px;top:249px;font-size:12px">account</div>
<div class="a" style="left:455px;top:265px;width:191px;height:17px;border:1px solid #d9d9d9;border-bottom-color:#cfcfcf;border-radius:2px;background:linear-gradient(#fbfbfb,#e6e6e6)"></div>
<div class="t" style="left:458px;top:266px;font-size:12px">account.addr1</div>
<div class="t" style="left:574px;top:266px;font-size:12px">account</div>
<div class="a" style="left:455px;top:282px;width:191px;height:17px;border:1px solid #d9d9d9;border-bottom-color:#cfcfcf;border-radius:2px;background:linear-gradient(#fbfbfb,#e6e6e6)"></div>
<div class="t" style="left:458px;top:283px;font-size:12px">account.addr2</div>
<div class="t" style="left:574px;top:283px;font-size:12px">account</div>
<div class="a" style="left:455px;top:299px;width:191px;height:17px;border:1px solid #d9d9d9;border-bottom-color:#cfcfcf;border-radius:2px;background:linear-gradient(#fbfbfb,#e6e6e6)"></div>
<div class="t" style="left:458px;top:300px;font-size:12px">account.city</div>
<div class="t" style="left:574px;top:300px;font-size:12px">account</div>
<div class="a" style="left:455px;top:316px;width:191px;height:17px;border:1px solid #d9d9d9;border-bottom-color:#cfcfcf;border-radius:2px;background:linear-gradient(#fbfbfb,#e6e6e6)"></div>
<div class="t" style="left:458px;top:317px;font-size:12px">account.state</div>
<div class="t" style="left:574px;top:317px;font-size:12px">account</div>
<div class="a" style="left:455px;top:333px;width:191px;height:17px;border:1px solid #d9d9d9;border-bottom-color:#cfcfcf;border-radius:2px;background:linear-gradient(#fbfbfb,#e6e6e6)"></div>
<div class="t" style="left:458px;top:334px;font-size:12px">account.zip</div>
<div class="t" style="left:574px;top:334px;font-size:12px">account</div>
<div class="a" style="left:455px;top:350px;width:191px;height:17px;border:1px solid #d9d9d9;border-bottom-color:#cfcfcf;border-radius:2px;background:linear-gradient(#fbfbfb,#e6e6e6)"></div>
<div class="t" style="left:458px;top:351px;font-size:12px">account.country</div>
<div class="t" style="left:574px;top:351px;font-size:12px">account</div>
<div class="a" style="left:455px;top:367px;width:191px;height:17px;border:1px solid #d9d9d9;border-bottom-color:#cfcfcf;border-radius:2px;background:linear-gradient(#fbfbfb,#e6e6e6)"></div>
<div class="t" style="left:458px;top:368px;font-size:12px">account.phone</div>
<div class="t" style="left:574px;top:368px;font-size:12px">account</div>
<div class="a" style="left:455px;top:384px;width:191px;height:17px;border:1px solid #d9d9d9;border-bottom-color:#cfcfcf;border-radius:2px;background:linear-gradient(#fbfbfb,#e6e6e6)"></div>
<div class="t" style="left:458px;top:385px;font-size:12px">account.langpref</div>
<div class="t" style="left:574px;top:385px;font-size:12px">account</div>
<div class="a" style="left:455px;top:401px;width:191px;height:17px;border:1px solid #d9d9d9;border-bottom-color:#cfcfcf;border-radius:2px;background:linear-gradient(#fbfbfb,#e6e6e6)"></div>
<div class="t" style="left:458px;top:402px;font-size:12px">account.favcategory</div>
<div class="t" style="left:574px;top:402px;font-size:12px">account</div>
<div class="a" style="left:455px;top:418px;width:191px;height:17px;border:1px solid #d9d9d9;border-bottom-color:#cfcfcf;border-radius:2px;background:linear-gradient(#fbfbfb,#e6e6e6)"></div>
<div class="t" style="left:458px;top:419px;font-size:12px">account.mylistopt</div>
<div class="t" style="left:574px;top:419px;font-size:12px">account</div>
<div class="a" style="left:455px;top:435px;width:191px;height:17px;border:1px solid #d9d9d9;border-bottom-color:#cfcfcf;border-radius:2px;background:linear-gradient(#fbfbfb,#e6e6e6)"></div>
<div class="t" style="left:458px;top:436px;font-size:12px">account.banneropt</div>
<div class="t" style="left:574px;top:436px;font-size:12px">account</div>
<div class="a" style="left:455px;top:452px;width:191px;height:17px;border:1px solid #d9d9d9;border-bottom-color:#cfcfcf;border-radius:2px;background:linear-gradient(#fbfbfb,#e6e6e6)"></div>
<div class="t" style="left:458px;top:453px;font-size:12px">account.sourceapp</div>
<div class="t" style="left:574px;top:453px;font-size:12px">account</div>
<div class="a" style="left:423px;top:244px;width:22px;height:19px;border:1px solid #b8b8b8;border-radius:3px;background:linear-gradient(#fcfcfc,#efefef)"></div>
<svg class="a" style="left:422px;top:243px" width="22" height="20"><path d="M5 4.5L10 9.5L5 14.5M11 4.5L16 9.5L11 14.5" stroke="#1577d2" stroke-width="3.1" fill="none" stroke-linecap="butt" stroke-linejoin="miter"/><path d="M5 4.5L10 9.5L5 14.5M11 4.5L16 9.5L11 14.5" stroke="#20b2f3" stroke-width="1.30" fill="none" stroke-linecap="butt"/></svg>
<svg class="a" style="left:422px;top:271px" width="22" height="20"><path d="M7.5 3L14 9L7.5 15" stroke="#1577d2" stroke-width="3.6" fill="none" stroke-linecap="butt" stroke-linejoin="miter"/><path d="M7.5 3L14 9L7.5 15" stroke="#20b2f3" stroke-width="1.51" fill="none" stroke-linecap="butt"/></svg>
<svg class="a" style="left:422px;top:300px" width="22" height="20"><path d="M15 3L8.5 9L15 15" stroke="#1577d2" stroke-width="3.6" fill="none" stroke-linecap="butt" stroke-linejoin="miter"/><path d="M15 3L8.5 9L15 15" stroke="#20b2f3" stroke-width="1.51" fill="none" stroke-linecap="butt"/></svg>
<svg class="a" style="left:422px;top:327px" width="22" height="20"><path d="M10 4.5L5 9.5L10 14.5M16 4.5L11 9.5L16 14.5" stroke="#1577d2" stroke-width="3.1" fill="none" stroke-linecap="butt" stroke-linejoin="miter"/><path d="M10 4.5L5 9.5L10 14.5M16 4.5L11 9.5L16 14.5" stroke="#20b2f3" stroke-width="1.30" fill="none" stroke-linecap="butt"/></svg>
<svg class="a" style="left:651px;top:246px" width="14" height="14"><rect x="0" y="0" width="14" height="3.5" fill="#8d8d8d"/><g transform="translate(0,4)"><path d="M1.27 8.28L7 2.55L12.73 8.28" stroke="#8d8d8d" stroke-width="3.6" fill="none"/></g></svg>
<svg class="a" style="left:651px;top:276px" width="14" height="10"><path d="M1.27 8.28L7 2.55L12.73 8.28" stroke="#8d8d8d" stroke-width="3.6" fill="none"/></svg>
<svg class="a" style="left:651px;top:304px" width="14" height="10"><path d="M1.27 1.27L7 7L12.73 1.27" stroke="#8d8d8d" stroke-width="3.6" fill="none"/></svg>
<svg class="a" style="left:651px;top:330px" width="14" height="14"><g><path d="M1.27 1.27L7 7L12.73 1.27" stroke="#8d8d8d" stroke-width="3.6" fill="none"/></g><rect x="0" y="10.2" width="14" height="3.7" fill="#8d8d8d"/></svg>
<div class="a" style="left:430px;top:278px;width:171px;height:20px;border:1px solid #767676;border-radius:3px;background:linear-gradient(#fff,#e4e5f0);box-shadow:2px 2px 2px rgba(0,0,0,0.3)"></div>
<div class="t" style="left:436px;top:281px;font-size:12px;color:#575757">Select all columns of the table</div>
<div class="a" style="left:7px;top:515px;width:674px;height:1px;background:#a0a0a0"></div>
<div class="a" style="left:7px;top:516px;width:674px;height:1px;background:#fff"></div>
<div class="a" style="left:14px;top:525px;width:73px;height:21px;border-radius:3px;border:1px solid #707070;background:linear-gradient(#f2f2f2 0%,#ebebeb 50%,#dddddd 50%,#cfcfcf 100%);box-shadow:inset 0 0 0 1px #fff"></div>
<svg class="a" style="left:30px;top:528px" width="16" height="16"><defs><radialGradient id="hg" cx="0.45" cy="0.35" r="0.7"><stop offset="0" stop-color="#3d9be8"/><stop offset="1" stop-color="#0a5cb8"/></radialGradient></defs><circle cx="7.9" cy="7.8" r="7" fill="url(#hg)"/></svg>
<div class="t" style="left:34.7px;top:529px;font-size:11px;color:#fff;font-weight:bold">?</div>
<div class="t" style="left:50px;top:529px;font-size:11px">Help</div>
<div class="a" style="left:355px;top:525px;width:73px;height:21px;border-radius:3px;border:1px solid #adb2b5;background:#f4f4f4;color:#838383"></div>
<div class="t" style="left:375px;top:529px;font-size:11px;color:#838383">&lt; Back</div>
<div class="a" style="left:437px;top:525px;width:73px;height:21px;border-radius:3px;border:1px solid #3c7fb1;background:linear-gradient(#edf3f7 0%,#e4eef4 50%,#d3e3ec 50%,#c6dae6 100%);box-shadow:inset 0 0 0 1px #5fd6f8"></div>
<div class="t" style="left:455px;top:529px;font-size:11px">Next &gt;</div>
<div class="a" style="left:519px;top:525px;width:73px;height:21px;border-radius:3px;border:1px solid #707070;background:linear-gradient(#f2f2f2 0%,#ebebeb 50%,#dddddd 50%,#cfcfcf 100%);box-shadow:inset 0 0 0 1px #fff"></div>
<div class="t" style="left:541px;top:529px;font-size:11px">Finish</div>
<div class="a" style="left:601px;top:525px;width:73px;height:21px;border-radius:3px;border:1px solid #707070;background:linear-gradient(#f2f2f2 0%,#ebebeb 50%,#dddddd 50%,#cfcfcf 100%);box-shadow:inset 0 0 0 1px #fff"></div>
<div class="t" style="left:620px;top:529px;font-size:11px">Cancel</div>
</body></html>
